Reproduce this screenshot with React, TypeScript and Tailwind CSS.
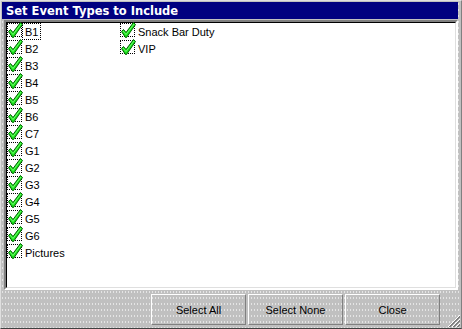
import React from 'react';

const col1 = ['B1', 'B2', 'B3', 'B4', 'B5', 'B6', 'C7', 'G1', 'G2', 'G3', 'G4', 'G5', 'G6', 'Pictures'];
const col2 = ['Snack Bar Duty', 'VIP'];

function Check() {
  return (
    <svg width="15" height="14" viewBox="0 0 15 14" className="overflow-visible">
      <polygon
        points="0.5,7.5 2.5,5.5 5,8.5 12.5,-1.5 14.5,0.5 5.5,13.5 4.5,13.5"
        fill="#18e018"
        stroke="#006400"
        strokeWidth="1"
        strokeLinejoin="round"
      />
      <polyline points="2,7 5,10.5 13,0" fill="none" stroke="#70ff70" strokeWidth="1" />
    </svg>
  );
}

function Item({ label, focused }: { label: string; focused?: boolean }) {
  return (
    <div className="flex items-start h-[17px]">
      <div className="w-[15px] h-[14px] border border-dotted border-black flex items-start">
        <Check />
      </div>
      <span
        className={`h-[17px] px-[2px] leading-[16px] border border-dotted ${focused ? 'border-black' : 'border-transparent'}`}
      >
        {label}
      </span>
    </div>
  );
}

function Btn({ label }: { label: string }) {
  return (
    <button className="w-[95px] h-[31px] pt-[2px] border border-t-white border-l-white border-r-[#808080] border-b-[#808080] text-[11px] text-black bg-transparent">
      {label}
    </button>
  );
}

export default function App() {
  return (
    <div
      className="relative w-[462px] h-[329px] overflow-hidden bg-[#c0c0c0] bg-[radial-gradient(circle,#e4e4e4_0.7px,transparent_0.9px)] bg-size-[3px_6px] border-t border-l border-t-[#dfdfdf] border-l-[#dfdfdf] border-r border-b border-r-[#808080] border-b-[#404040]"
      style={{ fontFamily: '"Liberation Sans", Arial, sans-serif' }}
    >
      <div className="flex flex-col pt-[1px] pl-[1px]">
        <div
          className="w-[456px] h-[17px] bg-[#000080] text-white font-bold text-[11.5px] leading-[15px] pt-[2px] pl-[4px]"
          style={{ fontFamily: '"DejaVu Sans", Verdana, sans-serif' }}
        >
          Set Event Types to Include
        </div>
        <div className="h-[1px]" />
        <div className="ml-[2px] w-[454px] h-[270px] border-2 border-t-[#808080] border-l-[#808080] border-r-white border-b-white">
          <div className="w-full h-full border border-t-black border-l-black border-r-[#dfdfdf] border-b-[#dfdfdf] bg-white flex text-[11px] text-black">
            <div className="w-[113px] flex flex-col">
              {col1.map((l, i) => (
                <Item key={l} label={l} focused={i === 0} />
              ))}
            </div>
            <div className="flex flex-col">
              {col2.map((l) => (
                <Item key={l} label={l} />
              ))}
            </div>
          </div>
        </div>
        <div className="flex justify-end gap-[2px] pr-[21px] mt-[4px]">
          <Btn label="Select All" />
          <Btn label="Select None" />
          <Btn label="Close" />
        </div>
      </div>
      <svg className="absolute right-[1px] bottom-[1px]" width="13" height="13" viewBox="0 0 13 13">
        <line x1="1" y1="13" x2="13" y2="1" stroke="#ffffff" />
        <line x1="2" y1="13" x2="13" y2="2" stroke="#808080" />
        <line x1="3" y1="13" x2="13" y2="3" stroke="#808080" />
        <line x1="5" y1="13" x2="13" y2="5" stroke="#ffffff" />
        <line x1="6" y1="13" x2="13" y2="6" stroke="#808080" />
        <line x1="7" y1="13" x2="13" y2="7" stroke="#808080" />
        <line x1="9" y1="13" x2="13" y2="9" stroke="#ffffff" />
        <line x1="10" y1="13" x2="13" y2="10" stroke="#808080" />
        <line x1="11" y1="13" x2="13" y2="11" stroke="#808080" />
      </svg>
    </div>
  );
}
